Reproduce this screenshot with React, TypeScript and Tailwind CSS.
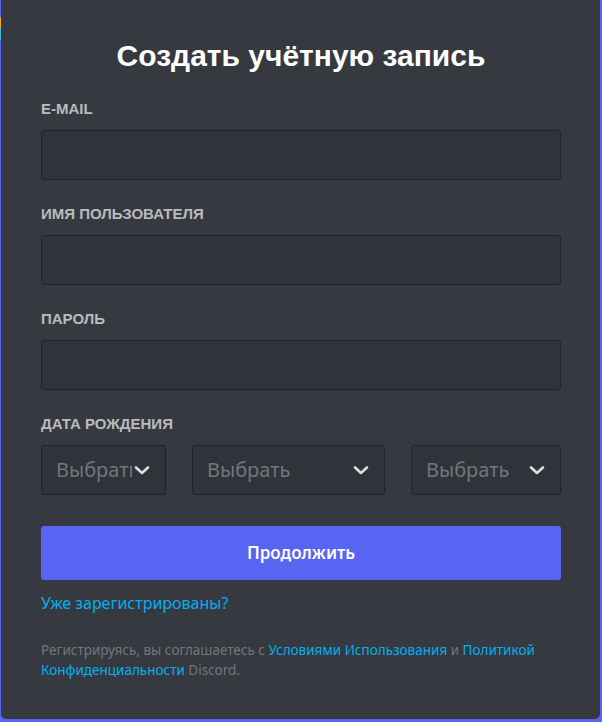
import React from "react";

const Chevron = () => (
  <svg width="20" height="20" viewBox="0 0 20 20" className="shrink-0">
    <path d="M4 7.5 L10 13 L16 7.5" fill="none" stroke="#dcddde" strokeWidth="2.6" strokeLinecap="round" strokeLinejoin="round" />
  </svg>
);

const Field = ({ label, first }: { label: string; first?: boolean }) => (
  <div className={first ? "" : "mt-6"}>
    <div className="mb-[11px] h-5 text-[15px] font-bold uppercase leading-5 text-[#b9bbbe]" style={{ fontFamily: '"Liberation Sans", Arial, sans-serif' }}>
      {label}
    </div>
    <div className="h-[50px] rounded-[3px] border border-[#222428] bg-[#303339]" />
  </div>
);

const Select = ({ w }: { w: string }) => (
  <div className={`${w} flex h-[50px] items-center rounded-[3px] border border-[#222428] bg-[#303339] pl-[14px] pr-[13px]`}>
    <span className="flex-1 overflow-hidden whitespace-nowrap text-[20px] text-[#72767d]">Выбрать</span>
    <Chevron />
  </div>
);

export default function App() {
  return (
    <div className="flex h-[722px] w-[602px] bg-[#5865f2]" style={{ fontFamily: '"Noto Sans", sans-serif' }}>
      <div className="flex w-px flex-col">
        <div className="h-[17px]" />
        <div className="h-[11px] bg-[#faa61a]" />
        <div className="h-[12px] bg-[#3fb8e8]" />
      </div>
      <div className="h-[719px] w-[599px] rounded-b-[5px] bg-[#36393f] pl-10 pr-[39px] pt-[38px]">
        <h1 className="h-9 text-center text-[30px] font-bold leading-9 text-white" style={{ fontFamily: '"Liberation Sans", Arial, sans-serif' }}>
          Создать учётную запись
        </h1>
        <div className="mt-[25px]">
          <Field label="E-mail" first />
          <Field label="Имя пользователя" />
          <Field label="Пароль" />
          <div className="mt-6">
            <div className="mb-[11px] h-5 text-[15px] font-bold uppercase leading-5 text-[#b9bbbe]" style={{ fontFamily: '"Liberation Sans", Arial, sans-serif' }}>
              Дата рождения
            </div>
            <div className="flex justify-between">
              <Select w="w-[125px]" />
              <Select w="w-[193px]" />
              <Select w="w-[150px]" />
            </div>
          </div>
        </div>
        <button className="mt-[31px] flex h-[54px] w-full items-center justify-center rounded-[3px] bg-[#5865f2] text-[17px] font-semibold text-white">
          Продолжить
        </button>
        <div className="mt-[13px] text-[16px] leading-5 text-[#00b0f4]">Уже зарегистрированы?</div>
        <p className="mt-[27px] text-[13.5px] leading-5 text-[#72767d]">
          Регистрируясь, вы соглашаетесь с <span className="text-[#00b0f4]">Условиями Использования</span> и{" "}
          <span className="text-[#00b0f4]">Политикой Конфиденциальности</span> Discord.
        </p>
      </div>
    </div>
  );
}
